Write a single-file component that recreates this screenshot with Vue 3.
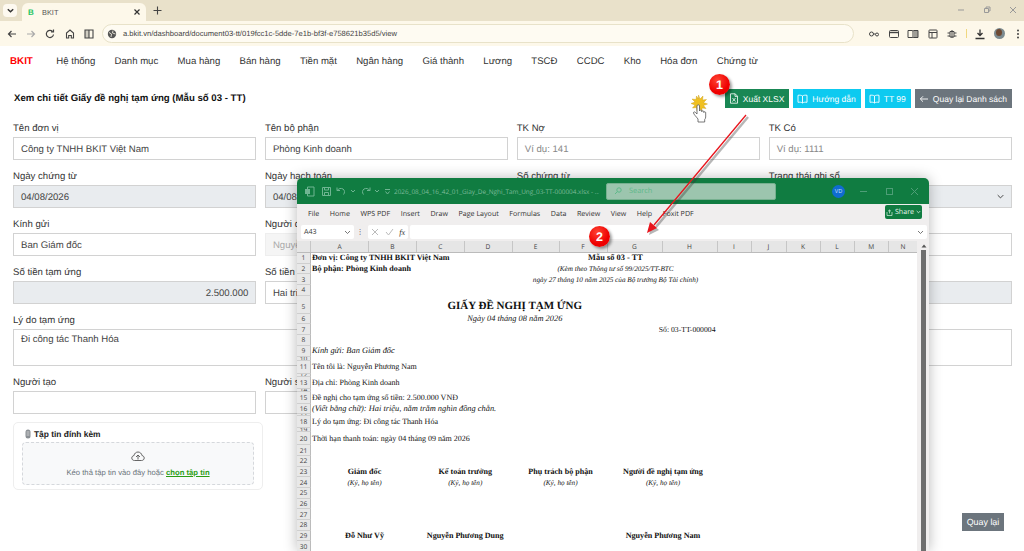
<template>
  <div class="screen">
    <!-- browser chrome -->
    <div class="tabstrip">
      <button class="tab-list">
        <svg width="9" height="9" viewBox="0 0 10 10"><path d="M2 3.500 5 6.500 8 3.500" fill="none" stroke="#333" stroke-width="1.600" /></svg>
      </button>
      <div class="tab">
        <span class="favicon">B</span>
        <span class="tab-title">BKIT</span>
        <svg class="tab-close" width="8" height="8" viewBox="0 0 8 8"><path d="M1.500 1.500l5 5M6.500 1.500l-5 5" stroke="#333" stroke-width="1.200" /></svg>
      </div>
      <svg class="tab-new" width="9" height="9" viewBox="0 0 9 9"><path d="M4.500 .5v8M.5 4.500h8" stroke="#444" stroke-width="1.100" /></svg>
      <div class="win-controls">
        <svg width="8" height="8" viewBox="0 0 8 8"><path d="M1 4h6" stroke="#999" /></svg>
        <svg width="8" height="8" viewBox="0 0 8 8"><path d="M1.500 2.500h4v4h-4zM3 2.500V1h4v4H5.500" fill="none" stroke="#999" /></svg>
        <svg width="8" height="8" viewBox="0 0 8 8"><path d="M1 1l6 6M7 1l-6 6" stroke="#999" /></svg>
      </div>
    </div>
    <div class="toolbar">
      <svg class="tb-icon" viewBox="0 0 12 12"><path d="M10 6H2.500M5.500 3 2.500 6l3 3" fill="none" stroke="#444" stroke-width="1.200" /></svg>
      <svg class="tb-icon" viewBox="0 0 12 12"><path d="M2 6h7.500M6.500 3l3 3-3 3" fill="none" stroke="#aaa" stroke-width="1.200" /></svg>
      <svg class="tb-icon" viewBox="0 0 12 12"><path d="M9.500 6.500A3.600 3.600 0 1 1 8.500 3.400M9.500 1.500v2.500H7" fill="none" stroke="#444" stroke-width="1.200" /></svg>
      <svg class="tb-icon" viewBox="0 0 12 12"><path d="M2.500 10V5L6 2l3.500 3v5H7.300V7.500H4.700V10z" fill="none" stroke="#444" stroke-width="1.100" /></svg>
      <svg class="tb-icon" viewBox="0 0 12 12"><path d="M6 2H2v8h4zM6 2h4v8H6" fill="none" stroke="#444" stroke-width="1.100" /><path d="M2 2h4v8H2z" fill="#444" opacity=".25" /></svg>
      <div class="omnibox">
        <svg width="10" height="10" viewBox="0 0 10 10"><circle cx="5" cy="5" r="4.200" fill="#555" /><path d="M2 3.500 4.500 5 4 8M6 1.500 5.500 4l3 1" fill="none" stroke="#fdf8ea" stroke-width=".8" /></svg>
        <span class="url">a.bkit.vn/dashboard/document03-tt/019fcc1c-5dde-7e1b-bf3f-e758621b35d5/view</span>
      </div>
      <div class="tb-right">
        <svg class="tb-icon" viewBox="0 0 12 12"><circle cx="3.500" cy="6" r="2" fill="none" stroke="#444" /><circle cx="9" cy="6.500" r="1.500" fill="none" stroke="#444" /><path d="M5.500 6h2" stroke="#444" /></svg>
        <svg class="tb-icon" viewBox="0 0 12 12"><rect x="1.500" y="2.500" width="9" height="7" rx="1" fill="none" stroke="#444" /><path d="M1.500 4.500h9" stroke="#444" stroke-width="1.400" /></svg>
        <svg class="tb-icon" viewBox="0 0 12 12"><path d="M1 2.500h4.500L6 3.200l.5-.7H11v7H6.500L6 10l-.5-.5H1zM6 3v7" fill="none" stroke="#444" /><path d="M7 3h4v6H7z" fill="#444" opacity=".5" /></svg>
        <svg class="tb-icon" viewBox="0 0 12 12"><rect x="2" y="2" width="8" height="8" rx=".6" fill="none" stroke="#444" /><path d="M2 4.500h8M5 4.500V10" stroke="#444" /></svg>
        <svg class="tb-icon" viewBox="0 0 12 12"><path d="M4 3.500h4v5.500H4zM6 2v8M1.500 5h2.500M8 5h2.500M1.500 8h2.500M8 8h2.500" fill="none" stroke="#444" /></svg>
        <span class="tb-divider"></span>
        <svg class="tb-icon" viewBox="0 0 12 12"><path d="M6 1.500v6M3.500 5 6 7.500 8.500 5M1.500 10.500h9" fill="none" stroke="#333" stroke-width="1.300" /></svg>
        <span class="profile"><span class="profile-face"></span></span>
        <svg class="tb-icon" viewBox="0 0 12 12"><circle cx="6" cy="2.500" r="1" fill="#444" /><circle cx="6" cy="6" r="1" fill="#444" /><circle cx="6" cy="9.500" r="1" fill="#444" /></svg>
      </div>
    </div>

    <!-- app page -->
    <nav class="nav">
      <span class="brand">BKIT</span>
      <a v-for="item in navItems" :key="item">{{ item }}</a>
    </nav>

    <div class="page-head">
      <h1>Xem chi tiết Giấy đề nghị tạm ứng (Mẫu số 03 - TT)</h1>
      <div class="actions">
        <button class="btn green">
          <svg width="10" height="11" viewBox="0 0 10 11"><path d="M1.500.8h4.700l2.300 2.400v7H1.500zM6 .8v2.600h2.500M3.500 5l3 3.500M6.500 5l-3 3.500" fill="none" stroke="#fff" stroke-width=".8" /></svg>
          Xuất XLSX
        </button>
        <button class="btn cyan">
          <svg width="11" height="10" viewBox="0 0 11 10"><path d="M5.500 2C4.500 1.200 2.500 1 1 1.300v7C2.500 8 4.500 8.200 5.500 9c1-.8 3-1 4.500-.7v-7C8.500 1 6.500 1.200 5.500 2zM5.500 2v7" fill="none" stroke="#fff" stroke-width=".9" /></svg>
          Hướng dẫn
        </button>
        <button class="btn cyan">
          <svg width="11" height="10" viewBox="0 0 11 10"><path d="M5.500 2C4.500 1.200 2.500 1 1 1.300v7C2.500 8 4.500 8.200 5.500 9c1-.8 3-1 4.500-.7v-7C8.500 1 6.500 1.200 5.500 2zM5.500 2v7" fill="none" stroke="#fff" stroke-width=".9" /></svg>
          TT 99
        </button>
        <button class="btn gray">
          <svg width="10" height="8" viewBox="0 0 10 8"><path d="M9 4H1.500M4 1.300 1.300 4 4 6.700" fill="none" stroke="#fff" stroke-width=".9" /></svg>
          Quay lại Danh sách
        </button>
      </div>
    </div>

    <div class="form">
      <div v-for="f in fields" :key="f.label" class="field" :class="f.cls">
        <label>{{ f.label }}</label>
        <div class="input" :class="f.type">
          <span v-if="f.placeholder" class="ph">{{ f.placeholder }}</span>
          {{ f.value }}
          <svg v-if="f.type === 'locked select'" class="chevron" width="7" height="5" viewBox="0 0 10 6"><path d="M1 1l4 4 4-4" fill="none" stroke="#444" stroke-width="1.400" /></svg>
        </div>
      </div>
    </div>

    <div class="attach">
      <div class="attach-title">
        <svg width="6" height="10" viewBox="0 0 6 10"><rect x=".5" y=".5" width="5" height="9" rx="2.500" fill="#8a8f94" /><path d="M2.200 2v5M3.800 2v5" stroke="#ddd" stroke-width=".6" /></svg>
        Tập tin đính kèm
      </div>
      <div class="dropzone">
        <svg width="14" height="11" viewBox="0 0 14 11"><path d="M3.500 9.500C1.800 9.500.8 8.400.8 7c0-1.300 1-2.300 2.200-2.400C3.300 2.500 5 1 7 1s3.700 1.500 4 3.600c1.200.1 2.200 1.100 2.200 2.400 0 1.400-1 2.500-2.700 2.500z" fill="none" stroke="#555" stroke-width=".9" /><path d="M7 8.500V4M5 6l2-2 2 2" fill="none" stroke="#555" stroke-width=".9" /></svg>
        <p>Kéo thả tập tin vào đây hoặc <a>chọn tập tin</a></p>
      </div>
    </div>

    <button class="btn gray back-fixed">Quay lại</button>

    <!-- excel window on top of the page -->
    <div class="excel">
      <div class="xl-title">
        <svg class="xl-qat first" width="11" height="11" viewBox="0 0 11 11"><path d="M3.500 1h6.500v9H3.500z" fill="none" stroke="#6fb592" /><rect x="1" y="3" width="5" height="5" fill="#6fb592" /></svg>
        <svg class="xl-qat save" width="11" height="11" viewBox="0 0 11 11"><path d="M1.500 1.500h8v8h-8zM3.500 1.500v2.500h4v-2.500M3.500 9.500V6.500h4v3" fill="none" stroke="#6fb592" /></svg>
        <svg class="xl-qat undo" width="13" height="11" viewBox="0 0 13 11"><path d="M2 1.500v3h3M2.200 4.500C3.500 2.500 6 1.800 8 3c1.800 1.200 2 3.800.5 5.500" fill="none" stroke="#6fb592" /></svg>
        <svg class="xl-qat tight" width="6" height="6" viewBox="0 0 6 6"><path d="M1 2l2 2 2-2" fill="none" stroke="#6fb592" /></svg>
        <svg class="xl-qat undo" width="13" height="11" viewBox="0 0 13 11"><path d="M11 1.500v3H8M10.800 4.500C9.500 2.500 7 1.800 5 3c-1.800 1.200-2 3.800-.5 5.500" fill="none" stroke="#6fb592" /></svg>
        <svg class="xl-qat tight" width="6" height="6" viewBox="0 0 6 6"><path d="M1 2l2 2 2-2" fill="none" stroke="#6fb592" /></svg>
        <svg class="xl-qat custom" width="7" height="7" viewBox="0 0 7 7"><path d="M1 1.500h5M1.500 3.500 3.500 6l2-2.500" fill="none" stroke="#6fb592" /></svg>
        <span class="xl-file">2026_08_04_16_42_01_Giay_De_Nghi_Tam_Ung_03-TT-000004.xlsx  -  ...</span>
        <div class="xl-search">
          <svg width="8" height="8" viewBox="0 0 8 8"><circle cx="5" cy="3" r="2.200" fill="none" stroke="#5fb98a" /><path d="M3.400 4.600 1 7" stroke="#5fb98a" /></svg>
          Search
        </div>
        <span class="xl-user">VD</span>
        <div class="xl-winbtns">
          <svg width="9" height="9" viewBox="0 0 9 9"><path d="M1 4.500h7" stroke="#4e9e77" /></svg>
          <svg width="9" height="9" viewBox="0 0 9 9"><rect x="1.500" y="1.500" width="6" height="6" fill="none" stroke="#4e9e77" /></svg>
          <svg width="9" height="9" viewBox="0 0 9 9"><path d="M1 1l7 7M8 1 1 8" stroke="#4e9e77" /></svg>
        </div>
      </div>
      <div class="xl-menu">
        <span v-for="m in xlMenu" :key="m">{{ m }}</span>
        <button class="xl-share">
          <svg width="7" height="7" viewBox="0 0 7 7"><path d="M1 3v3.500h5V3M3.500 4.500V1M2 2.300 3.500 1 5 2.300" fill="none" stroke="#d6eee0" stroke-width=".7" /></svg>
          Share
          <svg width="5" height="4" viewBox="0 0 5 4"><path d="M.7 1l1.800 1.800L4.300 1" fill="none" stroke="#fff" stroke-width=".7" /></svg>
        </button>
      </div>
      <div class="xl-formula">
        <div class="xl-namebox">A43
          <svg width="7" height="5" viewBox="0 0 7 5"><path d="M1 1l2.500 2.500L6 1" fill="none" stroke="#555" stroke-width=".8" /></svg>
        </div>
        <span class="xl-dots">⋮</span>
        <div class="xl-fx">
          <svg width="8" height="8" viewBox="0 0 8 8"><path d="M1 1l6 6M7 1 1 7" stroke="#bbb" /></svg>
          <svg width="9" height="8" viewBox="0 0 9 8"><path d="M1 4l2.500 3L8 1" fill="none" stroke="#bbb" /></svg>
          <i>fx</i>
        </div>
        <div class="xl-bar">
          <svg width="7" height="5" viewBox="0 0 7 5"><path d="M1 1l2.500 2.500L6 1" fill="none" stroke="#555" stroke-width=".8" /></svg>
        </div>
      </div>
      <div class="xl-body">
        <div class="xl-sheet">
          <div class="xl-row xl-heads">
            <span class="corner"></span>
            <span v-for="c in xlCols" :key="c">{{ c }}</span>
          </div>
          <div v-for="r in xlRows" :key="r.n" class="xl-row" :class="{ tall: r.n === 5 }" :style="{ height: r.h + 'px' }">
            <span class="rownum">{{ r.n }}</span>
            <span v-for="c in r.cells" :key="c.t" class="cell" :class="c.cls" :style="{ gridColumn: c.col }">{{ c.t }}</span>
          </div>
        </div>
        <div class="xl-scroll">
          <svg width="6" height="4" viewBox="0 0 6 4"><path d="M3 .5 5.500 3.500H.5z" fill="#555" /></svg>
          <div class="xl-thumb"></div>
        </div>
      </div>
    </div>

    <!-- screenshot annotations -->
    <svg class="arrow" width="1024" height="551" viewBox="0 0 1024 551">
      <g transform="translate(2 2)" opacity=".35">
        <path d="M746 115 654 225" stroke="#333" stroke-width="2.500" />
        <path d="M647 233 657 228 650 222z" fill="#333" />
      </g>
      <path d="M746 115 654 225" stroke="#e8141c" stroke-width="1.300" />
      <path d="M647 233 657 228 650 222z" fill="#e8141c" />
    </svg>
    <span class="marker m1">1</span>
    <span class="marker m2">2</span>
    <svg class="pointer" width="20" height="28" viewBox="0 0 20 28">
      <path d="M8.500 0l1.500 4 3-3-.5 4 4-.5-3 3 4 1.500-4 1.500 2.500 3-4-.5L12 16l-2.500-3L7 16l-.5-3.500-4 .5 2.500-3-4-1.500 4-1.500-3-3 4 .5L6.500 1l2 3z" fill="#f0c020" stroke="#c79a10" stroke-width=".4" />
      <path d="M8 24c-2-2.500-4-4.500-4.500-6-.3-1 1-1.500 1.800-.7L7 19V11c0-1.700 2.500-1.700 2.500 0v5c0-1.300 2.200-1.300 2.200 0v.7c0-1.200 2.100-1.200 2.100 0v.8c0-1 1.900-1 1.900.2V22c0 1-.5 2-1 2.500V27H8z" fill="#fff" stroke="#555" stroke-width=".8" />
    </svg>
  </div>
</template>

<script setup>
const navItems = ['Hệ thống', 'Danh mục', 'Mua hàng', 'Bán hàng', 'Tiền mặt', 'Ngân hàng', 'Giá thành', 'Lương', 'TSCĐ', 'CCDC', 'Kho', 'Hóa đơn', 'Chứng từ']

const fields = [
  { label: 'Tên đơn vị', value: 'Công ty TNHH BKIT Việt Nam' },
  { label: 'Tên bộ phận', value: 'Phòng Kinh doanh' },
  { label: 'TK Nợ', placeholder: 'Ví dụ: 141' },
  { label: 'TK Có', placeholder: 'Ví dụ: 1111' },
  { label: 'Ngày chứng từ', value: '04/08/2026', type: 'locked' },
  { label: 'Ngày hạch toán', value: '04/08/2026', type: 'locked' },
  { label: 'Số chứng từ', value: '03-TT-000004', type: 'locked' },
  { label: 'Trạng thái ghi sổ', type: 'locked select' },
  { label: 'Kính gửi', value: 'Ban Giám đốc' },
  { label: 'Người đề nghị', value: 'Nguyễn Phương Nam', type: 'disabled' },
  { label: 'Địa chỉ', value: 'Phòng Kinh doanh' },
  { label: 'Thời hạn thanh toán', value: '' },
  { label: 'Số tiền tạm ứng', value: '2.500.000', type: 'locked right' },
  { label: 'Số tiền bằng chữ', value: 'Hai triệu, năm trăm nghìn đồng chẵn', cls: 'span2' },
  { label: 'Loại tiền', value: '', type: 'locked' },
  { label: 'Lý do tạm ứng', value: 'Đi công tác Thanh Hóa', type: 'area', cls: 'span4' },
  { label: 'Người tạo', value: '' },
  { label: 'Người sửa', value: '' }
]

const xlMenu = ['File', 'Home', 'WPS PDF', 'Insert', 'Draw', 'Page Layout', 'Formulas', 'Data', 'Review', 'View', 'Help', 'Foxit PDF']
const xlCols = ['A', 'B', 'C', 'D', 'E', 'F', 'G', 'H', 'I', 'J', 'K', 'L', 'M', 'N']

// chieu cao tung dong lay theo anh, cac dong bi thu nho chi con vai px
const heights = {
  5: 18, 10: 4, 11: 13, 12: 3, 13: 12, 14: 3, 15: 12, 17: 2, 18: 12, 19: 4, 20: 13
}
const cells = {
  1: [{ t: 'Đơn vị: Công ty TNHH BKIT Việt Nam', col: '2 / span 4', cls: 'b' }, { t: 'Mẫu số 03 - TT', col: '6 / span 4', cls: 'b c big' }],
  2: [{ t: 'Bộ phận: Phòng Kinh doanh', col: '2 / span 4', cls: 'b' }, { t: '(Kèm theo Thông tư số 99/2025/TT-BTC', col: '6 / span 4', cls: 'i c small' }],
  3: [{ t: 'ngày 27 tháng 10 năm 2025 của Bộ trưởng Bộ Tài chính)', col: '6 / span 4', cls: 'i c small' }],
  5: [{ t: 'GIẤY ĐỀ NGHỊ TẠM ỨNG', col: '2 / span 8', cls: 'b c title' }],
  6: [{ t: 'Ngày 04 tháng 08 năm 2026', col: '2 / span 8', cls: 'i c' }],
  7: [{ t: 'Số: 03-TT-000004', col: '2 / span 8', cls: 'r' }],
  9: [{ t: 'Kính gửi: Ban Giám đốc', col: '2 / span 8', cls: 'i' }],
  11: [{ t: 'Tên tôi là: Nguyễn Phương Nam', col: '2 / span 8' }],
  13: [{ t: 'Địa chỉ: Phòng Kinh doanh', col: '2 / span 8' }],
  15: [{ t: 'Đề nghị cho tạm ứng số tiền: 2.500.000 VNĐ', col: '2 / span 8' }],
  16: [{ t: '(Viết bằng chữ): Hai triệu, năm trăm nghìn đồng chẵn.', col: '2 / span 8', cls: 'i' }],
  18: [{ t: 'Lý do tạm ứng: Đi công tác Thanh Hóa', col: '2 / span 8' }],
  20: [{ t: 'Thời hạn thanh toán: ngày 04 tháng 09 năm 2026', col: '2 / span 8' }],
  23: [
    { t: 'Giám đốc', col: '2 / span 2', cls: 'b c' },
    { t: 'Kế toán trưởng', col: '4 / span 2', cls: 'b c' },
    { t: 'Phụ trách bộ phận', col: '6 / span 2', cls: 'b c' },
    { t: 'Người đề nghị tạm ứng', col: '8 / span 2', cls: 'b c' }
  ],
  24: [
    { t: '(Ký, họ tên)', col: '2 / span 2', cls: 'i c small' },
    { t: '(Ký, họ tên) ', col: '4 / span 2', cls: 'i c small' },
    { t: '(Ký, họ tên)  ', col: '6 / span 2', cls: 'i c small' },
    { t: '(Ký, họ tên)   ', col: '8 / span 2', cls: 'i c small' }
  ],
  29: [
    { t: 'Đỗ Như Vỹ', col: '2 / span 2', cls: 'b c' },
    { t: 'Nguyễn Phương Dung', col: '4 / span 2', cls: 'b c' },
    { t: 'Nguyễn Phương Nam', col: '8 / span 2', cls: 'b c' }
  ]
}
const xlRows = []
for (let n = 1; n <= 30; n++) {
  xlRows.push({ n, h: heights[n] || 10.7, cells: cells[n] || [] })
}
</script>

<style scoped>
.screen {
  position: relative;
  width: 1024px;
  height: 551px;
  overflow: hidden;
  background: #fff;
  font-family: "Liberation Sans", Arial, sans-serif;
  font-size: 9.6px;
  color: #212529;
  text-rendering: geometricPrecision;
}

/* browser */
.tabstrip {
  height: 21px;
  background: #e9e1ca;
  display: flex;
  align-items: flex-end;
  padding-left: 3px;
}
.tab-list {
  width: 14px;
  height: 13px;
  margin: 0 5px 4px 0;
  padding: 0;
  border: 0;
  border-radius: 4px;
  background: #fdf9f0;
  display: flex;
  align-items: center;
  justify-content: center;
}
.tab {
  width: 124px;
  height: 18px;
  box-sizing: border-box;
  padding: 0 5px 0 6px;
  background: #fdf8ea;
  border-radius: 6px 6px 0 0;
  display: flex;
  align-items: center;
  gap: 6px;
}
.favicon {
  width: 8px;
  color: #22c55e;
  font-size: 8px;
  font-weight: bold;
}
.tab-title {
  flex: 1;
  font-size: 7.4px;
  color: #555;
}
.tab-new {
  margin: 0 0 6px 7px;
}
.win-controls {
  margin-left: auto;
  width: 60px;
  margin-right: 7px;
  padding-bottom: 7px;
  display: flex;
  justify-content: space-between;
}
.toolbar {
  height: 25px;
  background: #fdf8ea;
  display: flex;
  align-items: center;
  padding: 0 6px 0 6px;
  box-sizing: border-box;
  gap: 7.200px;
}
.tb-icon {
  width: 12px;
  height: 12px;
  flex: none;
}
.omnibox {
  width: 752px;
  height: 19px;
  box-sizing: border-box;
  border: 1px solid #e8e2c9;
  border-radius: 10px;
  background: #fefbf2;
  display: flex;
  align-items: center;
  gap: 6px;
  padding-left: 4px;
  flex: none;
}
.url {
  font-size: 7.600px;
  color: #444;
  white-space: nowrap;
}
.tb-right {
  margin-left: 7px;
  display: flex;
  align-items: center;
  gap: 7.500px;
}
.tb-divider {
  width: 1px;
  height: 9px;
  background: #f0d880;
}
.profile {
  width: 11px;
  height: 11px;
  border-radius: 50%;
  background: #7c8b90;
  overflow: hidden;
  display: flex;
  justify-content: center;
}
.profile-face {
  width: 6px;
  height: 7px;
  margin-top: 1px;
  border-radius: 50%;
  background: #6e4a34;
}

/* app */
.nav {
  height: 30px;
  box-sizing: border-box;
  padding: 1px 0 0 10px;
  display: flex;
  align-items: center;
  gap: 19.300px;
  color: #333;
  font-size: 9.6px;
}
.brand {
  width: 27px;
  font-weight: bold;
  color: #f00;
  font-size: 9.8px;
}
.page-head {
  margin-top: 13px;
  height: 19px;
  display: flex;
  align-items: center;
  justify-content: space-between;
  padding: 0 12px 0 14px;
}
.page-head h1 {
  margin: 0;
  font-size: 9.650px;
  font-weight: bold;
  color: #111;
}
.actions {
  display: flex;
  gap: 4px;
}
.btn {
  height: 19px;
  padding: 0 5px 0 4px;
  border: 0;
  color: #fff;
  font-family: inherit;
  font-size: 8.500px;
  text-rendering: geometricPrecision;
  display: inline-flex;
  align-items: center;
  gap: 4px;
  white-space: nowrap;
}
.green {
  background: #198754;
}
.cyan {
  background: #0dcaf0;
}
.gray {
  background: #6c757d;
}
.form {
  margin-top: 13px;
  padding: 0 12px 0 13px;
  display: grid;
  grid-template-columns: repeat(4, 1fr);
  column-gap: 8.500px;
  row-gap: 9px;
}
.field label {
  display: block;
  height: 16px;
  line-height: 16px;
  color: #333;
}
.span2 {
  grid-column: span 2;
}
.span4 {
  grid-column: span 4;
}
.input {
  height: 23px;
  box-sizing: border-box;
  border: 1px solid #d2d2d2;
  padding: 1px 7px 0;
  display: flex;
  align-items: center;
  color: #444;
  background: #fff;
  position: relative;
}
.ph {
  color: #888;
}
.locked {
  background: #e9ecef;
}
.right {
  justify-content: flex-end;
}
.disabled {
  background: #f5f5f5;
  border-color: #eee;
  color: #aaa;
}
.area {
  height: 37px;
  align-items: flex-start;
  padding-top: 4px;
}
.chevron {
  position: absolute;
  right: 7px;
  top: 8px;
}
.attach {
  margin: 8px 0 0 13px;
  width: 250px;
  height: 68px;
  box-sizing: border-box;
  border: 1px solid #eee;
  border-radius: 5px;
  padding: 4px 8px 0;
}
.attach-title {
  display: flex;
  align-items: center;
  gap: 3px;
  padding-left: 3px;
  height: 14px;
  font-size: 8.400px;
  font-weight: bold;
  color: #222;
}
.dropzone {
  margin-top: 1px;
  height: 43px;
  box-sizing: border-box;
  border: 1px dashed #d5d8dc;
  border-radius: 4px;
  background: #f8f9fa;
  display: flex;
  flex-direction: column;
  align-items: center;
  padding-top: 8px;
}
.dropzone p {
  margin: 6px 0 0;
  font-size: 7.700px;
  color: #6c757d;
}
.dropzone a {
  color: #2a9d14;
  font-weight: bold;
  text-decoration: underline;
}
.back-fixed {
  position: absolute;
  left: 962px;
  top: 513px;
  width: 42px;
  height: 18px;
  padding: 0;
  justify-content: center;
  font-size: 8.900px;
}

/* excel */
.excel {
  position: absolute;
  left: 297px;
  top: 178px;
  width: 632px;
  height: 373px;
  border-radius: 5px 5px 0 0;
  background: #f0eeee;
  box-shadow: 0 0 14px rgba(0, 0, 0, .28);
  display: flex;
  flex-direction: column;
  overflow: hidden;
  font-family: "Open Sans", "Liberation Sans", sans-serif;
}
.xl-title {
  height: 26px;
  flex: none;
  background: #107c41;
  display: flex;
  align-items: center;
  color: #7dbb9a;
}
.xl-qat {
  flex: none;
}
.xl-qat.first {
  margin-left: 7px;
}
.xl-qat.save {
  margin-left: 6px;
}
.xl-qat.undo {
  margin-left: 3px;
}
.xl-qat.tight {
  margin-left: 2px;
}
.xl-qat.custom {
  margin-left: 4px;
}
.xl-file {
  margin-left: 3px;
  width: 205px;
  flex: none;
  font-size: 6.400px;
  white-space: pre;
  overflow: hidden;
}
.xl-search {
  width: 170px;
  height: 17px;
  flex: none;
  box-sizing: border-box;
  margin-left: 7px;
  border-radius: 2px;
  background: #9cc5ae;
  border: 1px solid #76b08f;
  padding-left: 7px;
  display: flex;
  align-items: center;
  gap: 7px;
  font-size: 7.400px;
  color: #5fb98a;
}
.xl-user {
  width: 13px;
  height: 13px;
  margin-left: 56px;
  border-radius: 50%;
  flex: none;
  background: #0f6cd0;
  color: #cfe4fa;
  font-size: 5.600px;
  display: flex;
  align-items: center;
  justify-content: center;
}
.xl-winbtns {
  width: 60px;
  margin-left: 14px;
  display: flex;
  justify-content: space-between;
}
.xl-menu {
  height: 20px;
  flex: none;
  display: flex;
  align-items: center;
  gap: 10.600px;
  padding-left: 11px;
  font-size: 7.100px;
  color: #333;
}
.xl-share {
  position: absolute;
  left: 588px;
  top: 27px;
  width: 37px;
  height: 14px;
  padding: 0;
  border: 0;
  border-radius: 2px;
  background: #107c41;
  color: #e6f4ec;
  font-family: inherit;
  font-size: 7.100px;
  text-rendering: geometricPrecision;
  display: flex;
  align-items: center;
  justify-content: center;
  gap: 2px;
}
.xl-formula {
  height: 14px;
  flex: none;
  margin-top: 1px;
  display: flex;
  align-items: stretch;
  padding-left: 4px;
  font-size: 7.100px;
  color: #333;
}
.xl-namebox {
  width: 53px;
  background: #fff;
  border-radius: 2px;
  padding: 0 3px;
  box-sizing: border-box;
  display: flex;
  align-items: center;
  justify-content: space-between;
}
.xl-dots {
  width: 12px;
  text-align: center;
  line-height: 14px;
}
.xl-fx {
  width: 40px;
  background: #fff;
  border-radius: 2px;
  display: flex;
  align-items: center;
  justify-content: space-around;
  font-family: "Liberation Serif", serif;
  font-size: 8px;
  margin-left: 2px;
}
.xl-bar {
  margin-left: 2px;
  width: 517px;
  background: #fff;
  border-radius: 2px;
  display: flex;
  align-items: center;
  justify-content: flex-end;
  padding-right: 3px;
  box-sizing: border-box;
}
.xl-body {
  flex: 1;
  min-height: 0;
  margin-top: 2px;
  display: flex;
}
.xl-sheet {
  width: 620px;
  background: #fff;
  overflow: hidden;
}
.xl-row {
  display: grid;
  grid-template-columns: 14px 58px 48px 47.500px 48px 47px 48px 55px 55px 34px 35px 34px 34px 34.500px 29px;
  align-items: center;
  overflow: hidden;
  box-sizing: border-box;
  font-family: "Liberation Serif", serif;
  font-size: 8px;
  color: #111;
}
.xl-heads {
  height: 12px;
  background: #e6e6e6;
  font-family: "Open Sans", "Liberation Sans", sans-serif;
  font-size: 6.600px;
  color: #444;
  border-bottom: 1px solid #bbb;
}
.xl-heads span {
  height: 100%;
  text-align: center;
  line-height: 12px;
  border-right: 1px solid #c6c6c6;
}
.rownum {
  grid-column: 1;
  height: 100%;
  background: #e8e8e8;
  border-right: 1px solid #bbb;
  border-bottom: 1px solid #cfcfcf;
  box-sizing: border-box;
  display: flex;
  align-items: center;
  justify-content: center;
  font-family: "Open Sans", "Liberation Sans", sans-serif;
  font-size: 6.600px;
  color: #444;
  overflow: hidden;
}
.tall .rownum {
  padding-top: 5px;
}
.cell {
  grid-row: 1;
  white-space: nowrap;
  padding-left: 1px;
  line-height: 10px;
}
.b {
  font-weight: bold;
  font-size: 8.100px;
}
.i {
  font-style: italic;
  font-size: 8.400px;
}
.c {
  text-align: center;
}
.r {
  text-align: right;
  padding-right: 2px;
  font-size: 7.700px;
}
.small {
  font-size: 7.200px;
}
.big {
  font-size: 8.400px;
}
.title {
  font-size: 11px;
  line-height: 14px;
  padding-top: 3px;
}
.xl-scroll {
  flex: 1;
  background: #f0eeee;
  display: flex;
  flex-direction: column;
  align-items: center;
  padding: 3px 0 0 1px;
}
.xl-thumb {
  width: 5px;
  flex: 1;
  margin-top: 2px;
  background: #6e6e6e;
}

/* annotations */
.arrow {
  position: absolute;
  left: 0;
  top: 0;
  pointer-events: none;
}
.marker {
  position: absolute;
  width: 21px;
  height: 21px;
  border-radius: 50%;
  background: radial-gradient(circle at 40% 30%, #f43, #e00 60%);
  box-shadow: 2px 2px 3px rgba(0, 0, 0, .4);
  color: #fff;
  font-size: 12.500px;
  font-weight: bold;
  display: flex;
  align-items: center;
  justify-content: center;
}
.m1 {
  left: 709px;
  top: 74px;
}
.m2 {
  left: 589px;
  top: 226px;
}
.pointer {
  position: absolute;
  left: 690px;
  top: 95px;
}
</style>

<style>
html, body {
  margin: 0;
  background: #fff;
}
</style>
